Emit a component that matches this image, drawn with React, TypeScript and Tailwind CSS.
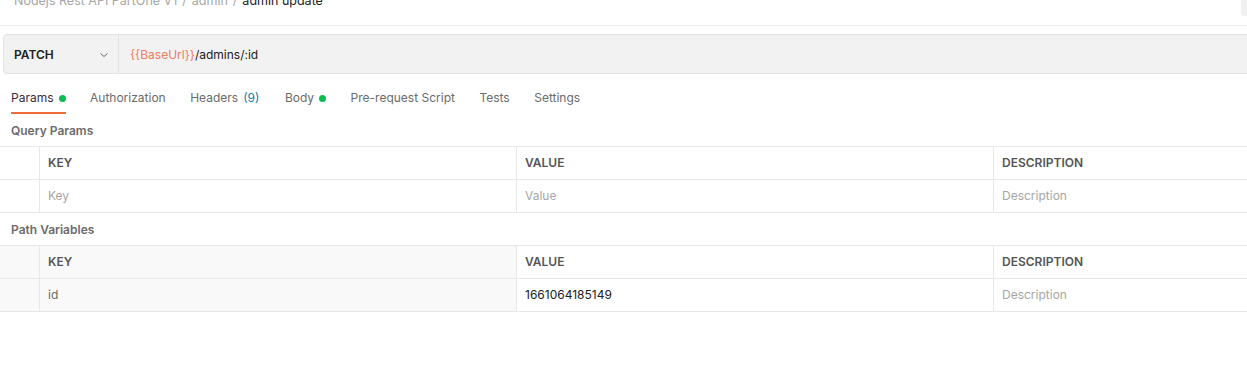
import React from 'react';

type Row = { key: string; value: string; description: string; keyPlaceholder?: boolean; valuePlaceholder?: boolean };

const tabs = [
  { label: 'Params', dot: true, active: true },
  { label: 'Authorization' },
  { label: 'Headers', count: '(9)' },
  { label: 'Body', dot: true },
  { label: 'Pre-request Script' },
  { label: 'Tests' },
  { label: 'Settings' },
];

const ParamTable: React.FC<{ row: Row; readOnlyKey?: boolean }> = ({ row, readOnlyKey }) => {
  const keyBg = readOnlyKey ? 'bg-[#f9f9f9]' : 'bg-white';
  return (
    <div className="flex flex-col border-t border-[#e8e8e8] text-[12px]">
      {/* header row */}
      <div className="flex h-[33px] border-b border-[#e8e8e8]">
        <div className={`w-[40px] shrink-0 border-r border-[#e8e8e8] ${keyBg}`} />
        <div className={`w-[477px] shrink-0 flex items-center px-2 border-r border-[#e8e8e8] font-semibold text-[#555] ${keyBg}`}>KEY</div>
        <div className="w-[477px] shrink-0 flex items-center px-2 border-r border-[#e8e8e8] font-semibold text-[#555]">VALUE</div>
        <div className="flex-1 flex items-center px-2 font-semibold text-[#555]">DESCRIPTION</div>
      </div>
      {/* data row */}
      <div className="flex h-[33px] border-b border-[#e8e8e8]">
        <div className={`w-[40px] shrink-0 border-r border-[#e8e8e8] ${keyBg}`} />
        <div className={`w-[477px] shrink-0 flex items-center px-2 border-r border-[#e8e8e8] ${keyBg} ${row.keyPlaceholder ? 'text-[#a6a6a6]' : 'text-[#6b6b6b]'}`}>{row.key}</div>
        <div className={`w-[477px] shrink-0 flex items-center px-2 border-r border-[#e8e8e8] ${row.valuePlaceholder ? 'text-[#a6a6a6]' : 'text-[#212121]'}`}>{row.value}</div>
        <div className="flex-1 flex items-center px-2 text-[#a6a6a6]">{row.description}</div>
      </div>
    </div>
  );
};

export default function App() {
  return (
    <div className="w-[1247px] h-[377px] overflow-hidden bg-white font-['Inter',sans-serif]">
      {/* Breadcrumb bar, scrolled so only its bottom shows */}
      <div className="flex h-[26px] border-b border-[#ebebeb]">
        <div className="pl-[14px] -mt-[8px] text-[12.5px] leading-[18px] flex gap-[5px] whitespace-nowrap">
          <span className="text-[#a6a6a6]">Nodejs Rest API PartOne V1</span>
          <span className="text-[#a6a6a6]">/</span>
          <span className="text-[#a6a6a6]">admin</span>
          <span className="text-[#a6a6a6]">/</span>
          <span className="text-[#212121]">admin update</span>
        </div>
        <div className="ml-auto w-[6px] h-[16px] rounded-bl-[4px] bg-[#f0f0f0]" />
      </div>

      {/* URL bar */}
      <div className="pl-[3px] pt-[8px] -mr-[6px]">
        <div className="flex h-[40px] bg-[#f2f2f2] border border-[#e3e3e3] rounded-[4px]">
          <div className="w-[115px] shrink-0 flex items-center justify-between pl-[10px] pr-[9px] pt-[1px] border-r border-[#e3e3e3]">
            <span className="text-[12px] font-semibold text-[#212121]">PATCH</span>
            <svg width="10" height="10" viewBox="0 0 10 10" fill="none" stroke="#6b6b6b" strokeWidth="1">
              <path d="M1.5 3.5 L5 6.5 L8.5 3.5" />
            </svg>
          </div>
          <div className="flex items-center pl-[11px] pt-[1px] text-[12px]">
            <span className="text-[#f27a5e]">{'{{BaseUrl}}'}</span>
            <span className="text-[#212121]">/admins/:id</span>
          </div>
        </div>
      </div>

      {/* Tabs */}
      <div className="flex items-end h-[40px] pl-[11px] text-[12px]">
        {tabs.map((t) => (
          <div
            key={t.label}
            className={`flex items-center gap-[5px] h-[30px] mr-[24.5px] border-b-2 ${t.active ? 'border-[#f26b3a] text-[#3b2a3b]' : 'border-transparent text-[#6b6b6b]'}`}
          >
            <span>{t.label}</span>
            {t.count && <span className="text-[#0d7ea3] mr-[1px]">{t.count}</span>}
            {t.dot && <span className="w-[7px] h-[7px] rounded-full bg-[#0cbb52]" />}
          </div>
        ))}
      </div>

      {/* Query Params */}
      <div className="h-[32px] flex items-center pl-[11px] pt-[2px] text-[12px] font-semibold text-[#6b6b6b]">Query Params</div>
      <ParamTable row={{ key: 'Key', value: 'Value', description: 'Description', keyPlaceholder: true, valuePlaceholder: true }} />

      {/* Path Variables */}
      <div className="h-[32px] flex items-center pl-[11px] pt-[2px] text-[12px] font-semibold text-[#6b6b6b]">Path Variables</div>
      <ParamTable row={{ key: 'id', value: '1661064185149', description: 'Description' }} readOnlyKey />
    </div>
  );
}
